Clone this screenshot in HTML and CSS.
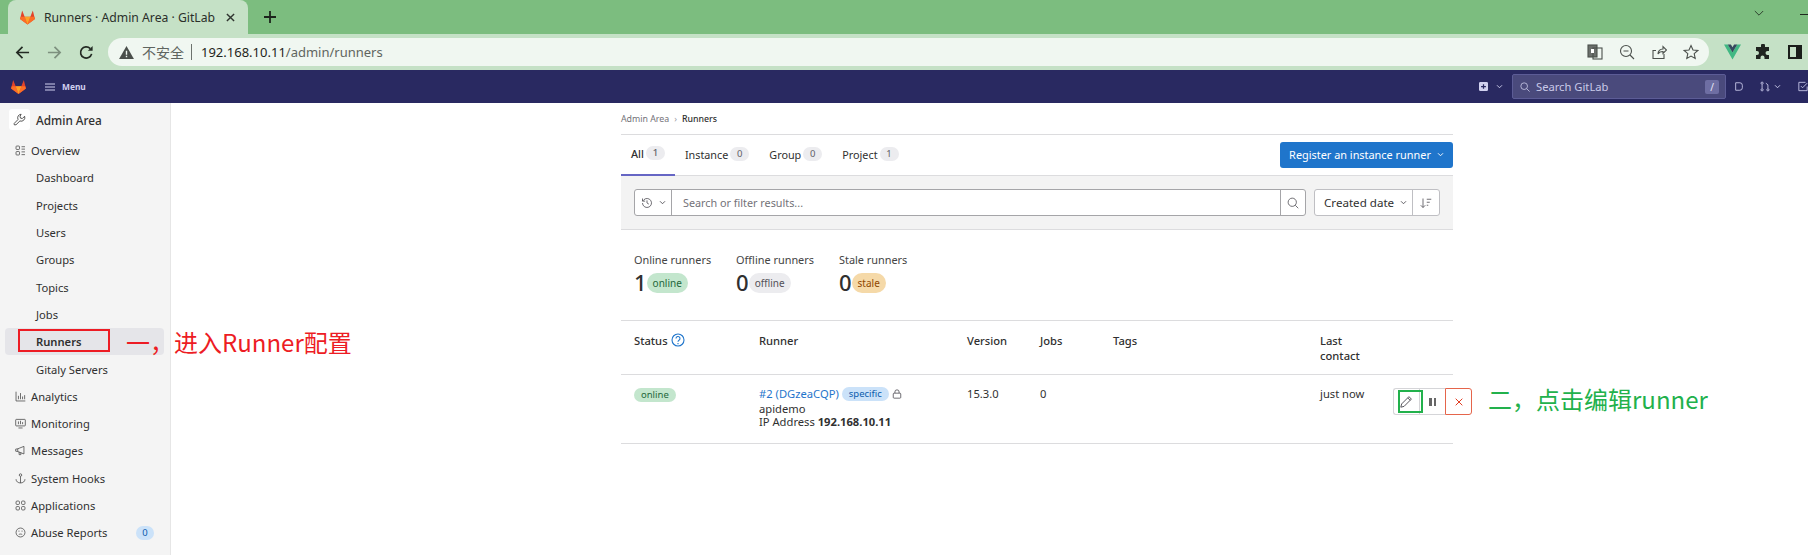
FILE: index.html
```html
<!DOCTYPE html>
<html lang="en">
<head>
<meta charset="utf-8">
<title>Runners · Admin Area · GitLab</title>
<link rel="stylesheet" href="styles.css">
</head>
<body>
<div class="tabstrip">
  <div class="tab">
    <svg class="favicon" viewBox="0 0 24 24"><path fill="#e24329" d="M12 22 1.5 14 4.5 2l3.500 9h8l3.500-9 3 12z"/><path fill="#fc6d26" d="M12 22 8 11H2.500L1.500 14zM12 22l4-11h5.500l1 3z"/><path fill="#fca326" d="M12 22 8 11h8z"/></svg>
    <span class="tab-title">Runners · Admin Area · GitLab</span>
    <svg class="tab-close" viewBox="0 0 10 10"><path d="M1 1l8 8M9 1l-8 8"/></svg>
  </div>
  <svg class="tab-new" viewBox="0 0 14 14"><path d="M7 1v12M1 7h12"/></svg>
  <svg class="win-chevron" viewBox="0 0 12 8"><path d="M1 1l5 5 5-5"/></svg>
  <span class="win-min"></span>
</div>
<div class="toolbar">
  <svg class="tb-ic" viewBox="0 0 16 16"><path d="M15 8H2M8 2 2 8l6 6"/></svg>
  <svg class="tb-ic tb-fwd" viewBox="0 0 16 16"><path d="M1 8h13M8 2l6 6-6 6"/></svg>
  <svg class="tb-ic" viewBox="0 0 16 16"><path d="M13.500 9.500A6 6 0 1 1 12 3.800"/><path class="fill" d="M14.500 1v5h-5z"/></svg>
  <div class="omnibox">
    <svg class="warn" viewBox="0 0 16 14"><path d="M8 0 16 14H0z"/><path class="warn-mark" d="M8 5v4.500M8 10.500v1.500"/></svg>
    <span class="insecure">不安全</span>
    <span class="omni-sep"></span>
    <span class="url">192.168.10.11<span class="url-path">/admin/runners</span></span>
    <span class="omni-actions">
      <svg class="om-ic" viewBox="0 0 16 16"><rect class="solid" x="1" y="1" width="9" height="12"/><rect x="6" y="4" width="9" height="11"/><path class="white" d="M4 5h3v4H4z"/></svg>
      <svg class="om-ic" viewBox="0 0 16 16"><circle cx="7" cy="7" r="5.500"/><path d="M11 11l4 4M4.500 7h5"/></svg>
      <svg class="om-ic" viewBox="0 0 16 16"><path d="M13 10v4.500H2V6.500h3M7 10c0-3 2-5 5-5V2.500L15.500 6 12 9.500V7.500c-2 0-4 .5-5 2.500z"/></svg>
      <svg class="om-ic" viewBox="0 0 16 16"><path d="m8 1.500 2 4.500 4.800.5-3.600 3.200 1 4.800L8 12.100 3.800 14.500l1-4.800L1.200 6.500 6 6z"/></svg>
    </span>
  </div>
  <svg class="ext ext-vue" viewBox="0 0 16 14"><path fill="#41b883" d="M0 0h3.500L8 7.500 12.500 0H16L8 14z"/><path fill="#35495e" d="M3.500 0h3L8 2.500 9.500 0h3L8 7.500z"/></svg>
  <svg class="ext ext-puzzle" viewBox="0 0 16 16"><path d="M6 1.500a2 2 0 0 1 4 0V3h4v4h-1.500a2 2 0 0 0 0 4H14v4H9.500v-1.500a2 2 0 0 0-4 0V15H1v-4h1a2 2 0 0 0 0-4H1V3h5z"/></svg>
  <svg class="ext ext-panel" viewBox="0 0 14 14"><path fill-rule="evenodd" d="M0 0h14v14H0zM2 2v10h6V2z"/></svg>
</div>
<header class="navbar">
  <svg class="nav-logo" viewBox="0 0 24 24"><path fill="#e24329" d="M12 22 1.500 14 4.500 2l3.500 9h8l3.500-9 3 12z"/><path fill="#fc6d26" d="M12 22 8 11H2.500L1.500 14zM12 22l4-11h5.500l1 3z"/><path fill="#fca326" d="M12 22 8 11h8z"/></svg>
  <svg class="nav-burger" viewBox="0 0 10 8"><path d="M0 1h10M0 4h10M0 7h10"/></svg>
  <span class="nav-menu">Menu</span>
  <span class="nav-spacer"></span>
  <svg class="nav-plus" viewBox="0 0 10 10"><path fill-rule="evenodd" d="M1.500 0h7A1.500 1.500 0 0 1 10 1.500v7A1.500 1.500 0 0 1 8.500 10h-7A1.500 1.500 0 0 1 0 8.500v-7A1.500 1.500 0 0 1 1.500 0zM4.300 2.500v2h-2v1.200h2v1.800h1.400V5.700h2V4.500h-2v-2z"/></svg>
  <svg class="nav-chev" viewBox="0 0 8 6"><path d="M1 1.500l3 3 3-3"/></svg>
  <div class="nav-search">
    <svg class="nav-search-ic" viewBox="0 0 12 12"><circle cx="5" cy="5" r="4"/><path d="M8 8l3.500 3.500"/></svg>
    <span class="nav-search-text">Search GitLab</span>
    <span class="nav-slash">/</span>
  </div>
  <svg class="nav-ic nav-issue" viewBox="0 0 12 12"><path d="M2 1.500h5a3 3 0 0 1 3 3v3a3 3 0 0 1-3 3H2z"/></svg>
  <svg class="nav-ic nav-mr" viewBox="0 0 12 12"><circle cx="2.500" cy="2" r="1.300"/><circle cx="2.500" cy="10" r="1.300"/><circle cx="9.500" cy="10" r="1.300"/><path d="M2.500 3.500v5M9.500 8.500V4L7 2"/></svg>
  <svg class="nav-chev nav-chev-mr" viewBox="0 0 8 6"><path d="M1 1.500l3 3 3-3"/></svg>
  <svg class="nav-ic nav-todo" viewBox="0 0 12 12"><path d="M11 6v5H1V1h8M3.500 5.500l2 2L11 2"/></svg>
</header>
<div class="page">
  <aside class="sidebar">
    <div class="side-context">
      <span class="side-avatar">
        <svg class="side-ic wrench" viewBox="0 0 16 16"><path d="M10 1.500a4.500 4.500 0 0 0-3.800 6.500L1.500 12.800v1.700h2.200l4.800-4.700A4.500 4.500 0 0 0 14.300 4l-2.800 2.800-2.300-.5-.5-2.300z"/></svg>
      </span>
      <span>Admin Area</span>
    </div>
    <nav class="side-list">
      <a class="side-item top"><svg class="side-ic" viewBox="0 0 16 16"><rect x="1.500" y="1.500" width="5" height="5" rx="1"/><rect x="1.500" y="9.500" width="5" height="5" rx="1"/><path d="M9.500 2.500h5M9.500 6h5M9.500 10h5M9.500 14h5"/></svg>Overview</a>
      <a class="side-item sub">Dashboard</a>
      <a class="side-item sub">Projects</a>
      <a class="side-item sub">Users</a>
      <a class="side-item sub">Groups</a>
      <a class="side-item sub">Topics</a>
      <a class="side-item sub">Jobs</a>
      <a class="side-item sub active">Runners</a>
      <a class="side-item sub">Gitaly Servers</a>
      <a class="side-item top"><svg class="side-ic" viewBox="0 0 16 16"><path d="M1.500 1v13.500H15M5 12V7M8 12V3M11 12V8M14 12V6"/></svg>Analytics</a>
      <a class="side-item top"><svg class="side-ic" viewBox="0 0 16 16"><rect x="1" y="2" width="14" height="9.500" rx="1"/><path d="M5 14.500h6M5 5v4M8 4v5M11 6v3"/></svg>Monitoring</a>
      <a class="side-item top"><svg class="side-ic" viewBox="0 0 16 16"><path d="M1 6v3l3 .5V5.500zM4 5.500l9-3.500v11L4 9.500M6 10v4h2.500v-3"/></svg>Messages</a>
      <a class="side-item top"><svg class="side-ic" viewBox="0 0 16 16"><circle cx="8" cy="3" r="1.800"/><path d="M8 5v9.500M1.500 9c0 3.500 3 5.500 6.500 5.500s6.500-2 6.500-5.500"/></svg>System Hooks</a>
      <a class="side-item top"><svg class="side-ic" viewBox="0 0 16 16"><rect x="1.500" y="1.500" width="5" height="5" rx="1.500"/><rect x="9.500" y="1.500" width="5" height="5" rx="1.500"/><rect x="1.500" y="9.500" width="5" height="5" rx="1.500"/><rect x="9.500" y="9.500" width="5" height="5" rx="1.500"/></svg>Applications</a>
      <a class="side-item top"><svg class="side-ic" viewBox="0 0 16 16"><circle cx="8" cy="8" r="6.500"/><path d="M5 6h1.500M9.500 6H11M5.500 11c1.500-1 3.500-1 5 0"/></svg>Abuse Reports<span class="side-badge">0</span></a>
    </nav>
  </aside>
  <main class="content">
    <div class="crumbs"><span>Admin Area</span><span class="crumb-sep">›</span><span class="crumb-cur">Runners</span></div>
    <div class="tabs">
      <span class="nav-tab selected">All<span class="count">1</span></span>
      <span class="nav-tab">Instance<span class="count">0</span></span>
      <span class="nav-tab">Group<span class="count">0</span></span>
      <span class="nav-tab">Project<span class="count">1</span></span>
      <span class="register">Register an instance runner<svg class="btn-chev" viewBox="0 0 8 6"><path d="M1 1.500l3 3 3-3"/></svg></span>
    </div>
    <div class="filter">
      <div class="filter-box">
        <span class="history">
          <svg class="gray-ic" viewBox="0 0 16 16"><path d="M2 8a6 6 0 1 0 2-4.500L2 5.500M2 2v3.500h3.500M8 4.500V8l2.500 1.500"/></svg>
          <svg class="chev-dark" viewBox="0 0 8 6"><path d="M1 1.500l3 3 3-3"/></svg>
        </span>
        <span class="filter-input">Search or filter results...</span>
        <span class="filter-go"><svg class="gray-ic" viewBox="0 0 16 16"><circle cx="7" cy="7" r="5.500"/><path d="M11 11l4 4"/></svg></span>
      </div>
      <div class="sorter">
        <span class="sort-field">Created date<svg class="chev-dark" viewBox="0 0 8 6"><path d="M1 1.500l3 3 3-3"/></svg></span>
        <span class="sort-dir"><svg class="gray-ic" viewBox="0 0 16 16"><path d="M4 2v12M1 11l3 3 3-3M9 3h6M9 7h4M9 11h2"/></svg></span>
      </div>
    </div>
    <div class="stats">
      <div class="stat"><div class="stat-label">Online runners</div><div class="stat-value">1<span class="pill green big">online</span></div></div>
      <div class="stat"><div class="stat-label">Offline runners</div><div class="stat-value">0<span class="pill grey big">offline</span></div></div>
      <div class="stat"><div class="stat-label">Stale runners</div><div class="stat-value">0<span class="pill orange big">stale</span></div></div>
    </div>
    <div class="table-row head">
      <div class="cell status-head">Status<svg class="help" viewBox="0 0 14 14"><circle cx="7" cy="7" r="6"/><path d="M5 5.500a2 2 0 1 1 3 1.700c-.7.400-1 .8-1 1.600M7 10v1.200"/></svg></div>
      <div class="cell">Runner</div>
      <div class="cell">Version</div>
      <div class="cell">Jobs</div>
      <div class="cell">Tags</div>
      <div class="cell last-contact">Last contact</div>
    </div>
    <div class="table-row body">
      <div class="cell"><span class="pill green">online</span></div>
      <div class="cell runner">
        <div class="runner-line"><a class="runner-link">#2 (DGzeaCQP)</a><span class="pill blue">specific</span><svg class="lock" viewBox="0 0 12 12"><rect x="1.500" y="5" width="9" height="6" rx="1"/><path d="M3.500 5V3.500a2.500 2.500 0 0 1 5 0V5"/></svg></div>
        <div>apidemo</div>
        <div>IP Address <b class="ip">192.168.10.11</b></div>
      </div>
      <div class="cell">15.3.0</div>
      <div class="cell">0</div>
      <div class="cell"></div>
      <div class="cell">just now</div>
      <div class="actions">
        <span class="act act-edit"><svg class="pencil" viewBox="0 0 16 16"><path d="M11 2l3 3-9 9-4 1 1-4zM9.500 3.500l3 3"/></svg></span>
        <span class="act act-pause"><i></i><i></i></span>
        <span class="act act-del"><svg class="del-ic" viewBox="0 0 12 12"><path d="M2 2l8 8M10 2l-8 8"/></svg></span>
      </div>
    </div>
  </main>
</div>
<span class="mark mark-red"></span>
<span class="mark mark-green"></span>
<span class="note note-red">一，进入Runner配置</span>
<span class="note note-green">二，点击编辑runner</span>
</body>
</html>
```
FILE: styles.css
```css
* { box-sizing: border-box; }
html, body { margin: 0; padding: 0; }
body {
  position: relative;
  width: 1808px;
  height: 555px;
  overflow: hidden;
  background: #fff;
  font-family: "Noto Sans", "Noto Sans CJK SC", sans-serif;
  font-size: 11.2px;
  color: #303030;
}
svg { display: block; flex: none; fill: none; stroke: currentColor; }

/* browser chrome */
.tabstrip {
  height: 34px;
  background: #7cbd7f;
  display: flex;
  align-items: flex-end;
  padding-left: 8px;
  position: relative;
}
.tab {
  width: 240px;
  height: 34px;
  background: #c5e1c6;
  border-radius: 8px 8px 0 0;
  display: flex;
  align-items: center;
  padding-left: 11px;
}
.favicon { width: 17px; height: 17px; stroke: none; }
.favicon path { stroke: none; }
.tab-title { margin-left: 8px; width: 180px; font-size: 12.2px; color: #2a2f2a; white-space: nowrap; }
.tab-close { width: 9px; height: 9px; margin-left: 2px; color: #303530; stroke-width: 1.6; }
.tab-new { width: 14px; height: 14px; margin: 0 0 10px 15px; color: #1c241c; stroke-width: 1.8; }
.win-chevron { width: 10px; height: 7px; position: absolute; left: 1754px; top: 10px; color: #1f2a1f; }
.win-min { position: absolute; left: 1800px; top: 14px; width: 8px; height: 1px; background: #1f2a1f; }

.toolbar {
  height: 36px;
  background: #c5e1c6;
  display: flex;
  align-items: center;
  padding: 0 6px 0 15px;
}
.tb-ic { width: 15px; height: 15px; margin-right: 17px; color: #232a23; stroke-width: 1.8; }
.tb-ic .fill { fill: currentColor; stroke: none; }
.tb-fwd { color: #7d907e; }
.omnibox {
  flex: 1 1 auto;
  height: 28px;
  margin-left: -3px;
  background: #f0f7f1;
  border-radius: 14px;
  display: flex;
  align-items: center;
  padding-left: 11px;
}
.warn { width: 15px; height: 13px; fill: #4a4f4b; stroke: none; }
.warn-mark { stroke: #f0f7f1; stroke-width: 1.5; }
.insecure { margin-left: 8px; width: 42px; font-size: 14px; color: #5f6560; font-family: "Noto Sans CJK SC", sans-serif; }
.omni-sep { width: 1px; height: 16px; margin: 0 9px 0 7px; background: #6c726d; }
.url { font-size: 13px; color: #1f2520; }
.url-path { color: #5f6560; }
.omni-actions { margin-left: auto; margin-right: 10px; display: flex; gap: 16px; }
.om-ic { width: 16px; height: 16px; color: #4b504c; stroke-width: 1.1; }
.om-ic .solid { fill: #6b6f6c; }
.om-ic .white { fill: #fff; stroke: none; }
.ext { width: 15px; height: 15px; margin-left: 14px; stroke: none; }
.ext path { stroke: none; }
.ext-vue { margin-left: 15px; height: 16px; width: 17px; }
.ext-puzzle { fill: #1f241f; width: 16px; height: 16px; }
.ext-panel { fill: #1a1e1a; width: 14px; height: 14px; margin-left: 17px; }

/* gitlab navbar */
.navbar {
  height: 33px;
  background: #292961;
  display: flex;
  align-items: center;
  padding-left: 10px;
  color: #d1d1f0;
  position: relative;
}
.nav-logo { width: 17px; height: 20px; stroke: none; }
.nav-logo path { stroke: none; }
.nav-burger { width: 10px; height: 8px; margin-left: 18px; stroke-width: 1; }
.nav-menu { margin-left: 7px; font-size: 8.400px; font-weight: 700; }
.nav-spacer { flex: 1; }
.nav-plus { width: 9px; height: 9px; fill: #d1d1f0; stroke: none; }
.nav-chev { width: 7px; height: 5px; margin-left: 8px; stroke-width: 1.100; }
.nav-search {
  width: 214px;
  height: 25px;
  margin-left: 9px;
  border: 1px solid #5c5c96;
  border-radius: 2px;
  background: #4a4a7c;
  display: flex;
  align-items: center;
  padding-left: 7px;
}
.nav-search-ic { width: 10px; height: 10px; color: #c8c8e6; }
.nav-search-text { margin-left: 6px; font-size: 11.2px; color: #c9c9e8; }
.nav-slash { margin-left: auto; margin-right: 6px; width: 14px; height: 14px; border-radius: 2px; background: #6e6ea3; color: #e6e6f7; font-size: 10px; line-height: 14px; text-align: center; }
.nav-ic { width: 10px; height: 11px; stroke-width: 1; }
.nav-issue { margin-left: 8px; }
.nav-mr { margin-left: 16px; }
.nav-chev-mr { margin-left: 4px; }
.nav-todo { margin-left: 17px; }

/* page */
.page { display: flex; height: 452px; }
.sidebar {
  width: 171px;
  flex: none;
  background: #f4f4f4;
  border-right: 1px solid #e6e6e6;
  padding: 3px 0 0;
}
.side-context { display: flex; align-items: center; height: 27px; padding-left: 9px; font-size: 11.8px; font-weight: 500; color: #303030; }
.side-avatar { width: 21px; height: 21px; background: #fff; border-radius: 3px; display: flex; align-items: center; justify-content: center; margin-right: 6px; }
.side-ic { width: 11px; height: 11px; margin-right: 5px; color: #444; stroke-width: 1.1; }
.wrench { margin: 0; width: 13px; height: 13px; }
.side-list { display: flex; flex-direction: column; margin-top: 4px; padding: 0 6px 0 5px; }
.side-item { height: 27.300px; display: flex; align-items: center; border-radius: 4px; color: #303030; white-space: nowrap; }
.side-item.top { padding-left: 10px; }
.side-item.sub { padding-left: 31px; }
.side-item.active { background: #e5e5e9; font-weight: 600; }
.side-badge { margin-left: auto; margin-right: 10px; width: 18px; height: 14px; border-radius: 7px; background: #cbe2f9; color: #0b5cad; font-size: 9.500px; line-height: 14px; text-align: center; }

.content { width: 832px; margin-left: 450px; flex: none; }
.crumbs { height: 32px; display: flex; align-items: center; gap: 5px; font-size: 8.800px; color: #737278; border-bottom: 1px solid #dcdcde; }
.crumb-sep { color: #9a9a9f; }
.crumb-cur { color: #303030; font-weight: 500; }
.tabs { height: 41px; display: flex; align-items: center; border-bottom: 1px solid #dcdcde; position: relative; font-size: 10.8px; color: #303030; }
.nav-tab { height: 41px; display: flex; align-items: center; padding: 0 10px 2px; }
.nav-tab.selected { border-bottom: 2px solid #6666c4; font-weight: 500; color: #303030; }
.count { margin-left: 2px; width: 19px; height: 14px; border-radius: 7px; background: #ececef; color: #626168; font-size: 9.500px; line-height: 14px; text-align: center; }
.register { margin-left: auto; height: 26px; width: 173px; padding-bottom: 2px; background: #1f75cb; border-radius: 3px; color: #fff; font-size: 10.9px; display: flex; align-items: center; justify-content: center; gap: 6px; }
.btn-chev { width: 7px; height: 5px; stroke-width: 1.100; }
.filter { height: 54px; display: flex; align-items: center; padding: 0 13px; gap: 8px; background: #f3f3f3; border-bottom: 1px solid #dcdcde; }
.filter-box { width: 673px; height: 27px; display: flex; background: #fff; border: 1px solid #a5a5a8; border-radius: 3px; }
.history { width: 37px; display: flex; align-items: center; padding-left: 6px; gap: 6px; border-right: 1px solid #a5a5a8; }
.gray-ic { width: 12px; height: 12px; color: #535158; stroke-width: 1.100; }
.chev-dark { width: 7px; height: 5px; color: #535158; stroke-width: 1.100; }
.filter-input { flex: 1; display: flex; align-items: center; padding-left: 11px; color: #737278; font-size: 10.8px; }
.filter-go { width: 25px; display: flex; align-items: center; justify-content: center; border-left: 1px solid #a5a5a8; }
.sorter { display: flex; height: 27px; background: #fff; border: 1px solid #bfbfc3; border-radius: 3px; }
.sort-field { width: 98px; padding-left: 9px; display: flex; align-items: center; gap: 6px; border-right: 1px solid #bfbfc3; font-size: 11.6px; }
.sort-dir { width: 26px; display: flex; align-items: center; justify-content: center; }
.stats { height: 91px; display: flex; padding: 22px 13px 0; border-bottom: 1px solid #dcdcde; }
.stat { margin-right: 25px; }
.stat-label { line-height: 16px; font-size: 10.9px; color: #444; }
.stat-value { display: flex; align-items: center; height: 27px; font-size: 22px; font-weight: 500; color: #303030; }
.pill { display: inline-block; height: 14px; padding: 0 7px; border-radius: 7px; font-size: 9.500px; line-height: 14px; }
.pill.big { height: 20px; line-height: 21px; border-radius: 10px; padding: 0 6px; margin-left: 0; margin-top: 3px; font-size: 10px; font-weight: 400; }
.pill.green { background: #c3e6cd; color: #24663b; }
.pill.grey { background: #ececef; color: #535158; }
.pill.orange { background: #f5d9a8; color: #8f4700; }
.pill.blue { background: #cbe2f9; color: #0b5cad; }
.table-row { display: grid; grid-template-columns: 138px 208px 73px 73px 207px 73px 60px; border-bottom: 1px solid #dcdcde; }
.table-row.head { height: 54px; font-weight: 500; }
.table-row.body { height: 69px; }
.cell { padding: 11px 0 0 13px; line-height: 16px; }
.table-row .cell:first-child ~ .cell { padding-left: 0; }
.status-head { display: flex; align-items: flex-start; gap: 3px; }
.table-row.head .cell { line-height: 15px; padding-top: 12px; }
.help { width: 14px; height: 14px; color: #1f75cb; stroke-width: 1.100; }
.last-contact { width: 50px; }
.table-row .runner { line-height: 12.500px; padding-top: 12px; }
.runner-line { display: flex; align-items: center; gap: 3px; height: 14px; margin-bottom: 2px; }
.runner-link { color: #1f75cb; }
.lock { width: 10px; height: 10px; color: #535158; }
.ip { font-weight: 700; color: #303030; }
.actions { display: flex; height: 27px; width: 79px; margin-top: 13px; }
.act { display: flex; align-items: center; justify-content: center; background: #fff; border: 1px solid #d5d5d8; }
.act-edit { width: 26px; border-radius: 3px 0 0 3px; border-right: 0; }
.pencil { width: 13px; height: 13px; color: #535158; stroke-width: 1.200; }
.act-pause { width: 26px; gap: 2px; border-right: 0; }
.act-pause i { width: 2.500px; height: 8px; background: #666; }
.act-del { width: 27px; border: 1px solid #e5654b; border-radius: 0 3px 3px 0; }
.del-ic { width: 10px; height: 10px; color: #dd2b0e; stroke-width: 1.100; }

/* red and green annotations drawn over the screenshot */
.mark { position: absolute; border-style: solid; border-width: 2px; }
.mark-red { left: 18px; top: 329px; width: 92px; height: 23px; border-color: #ed1c24; }
.mark-green { left: 1398px; top: 390px; width: 25px; height: 23px; border-color: #22b14c; }
.note { position: absolute; font-family: "Noto Sans CJK SC", "Noto Sans", sans-serif; font-size: 24px; line-height: 32px; white-space: nowrap; }
.note-red { left: 126px; top: 326px; color: #ed1c24; }
.note-green { left: 1488px; top: 383px; color: #22b14c; }
```
